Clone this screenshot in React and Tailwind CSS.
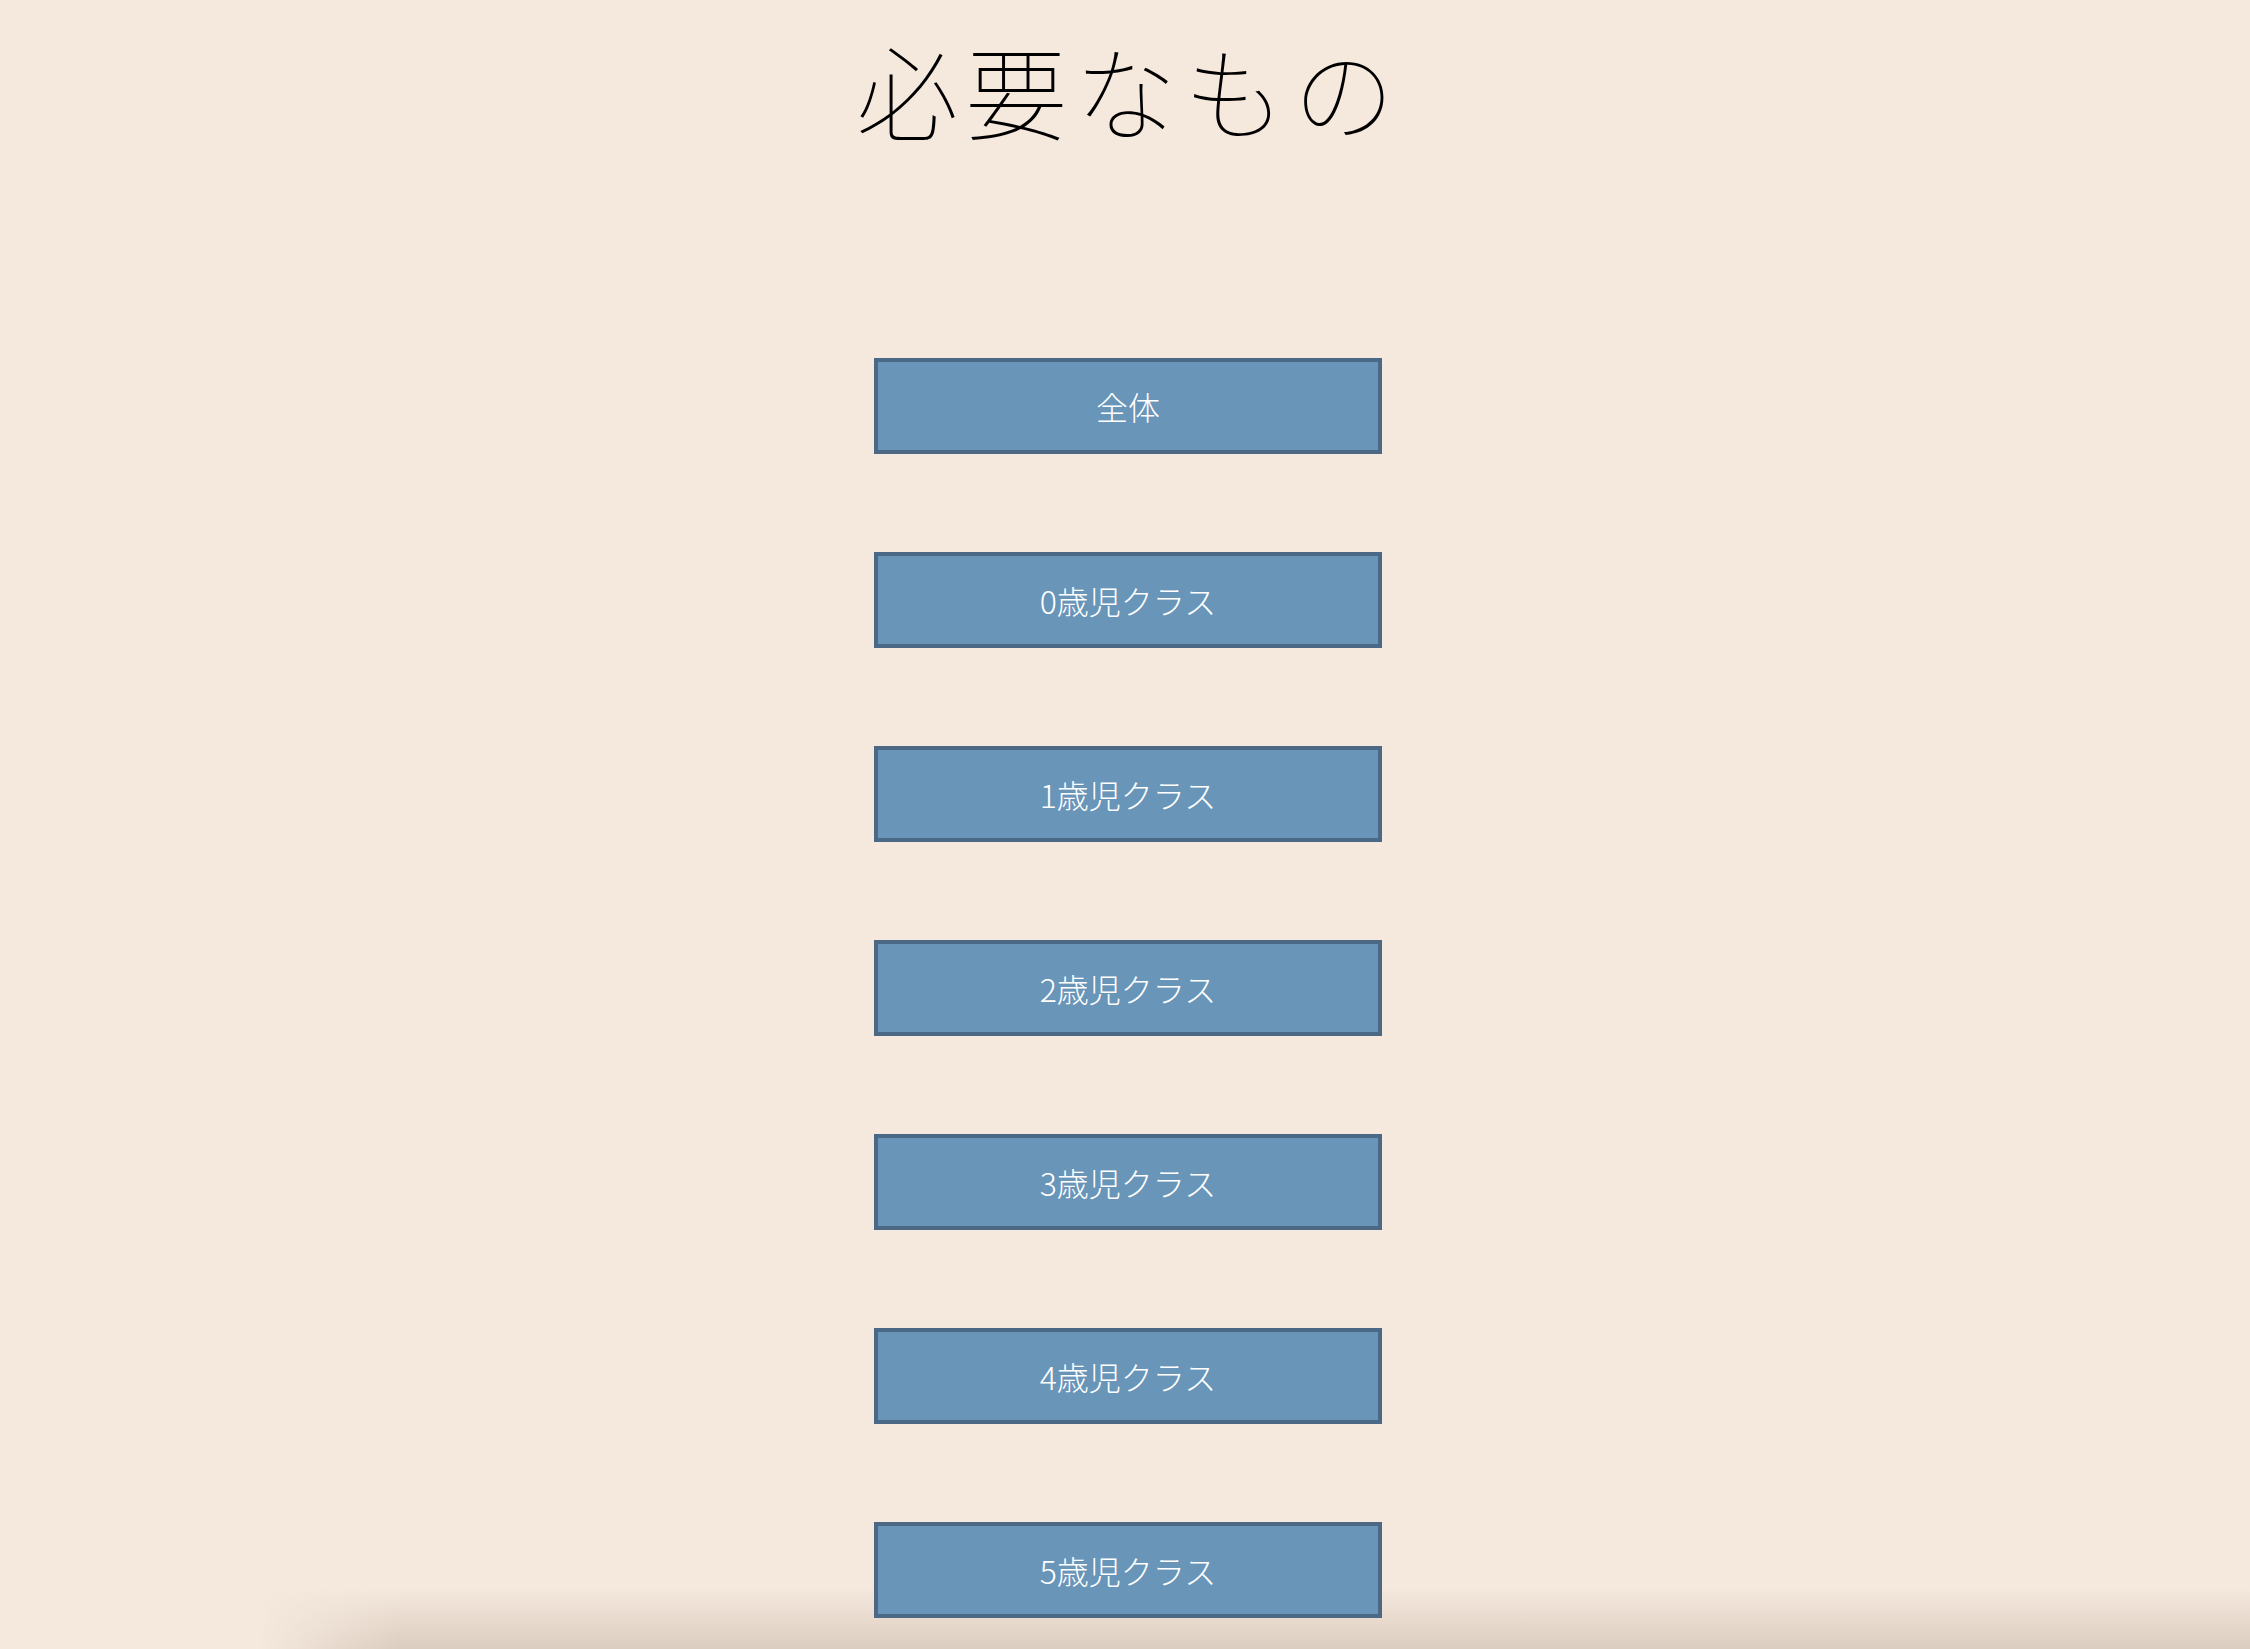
import React from "react";

const classes = ["全体", "0歳児クラス", "1歳児クラス", "2歳児クラス", "3歳児クラス", "4歳児クラス", "5歳児クラス"];

const App = () => {
  return (
    <div
      className="relative h-screen overflow-hidden bg-[#f5e8dd]"
      style={{ fontFamily: '"Noto Sans CJK JP", "Noto Sans", sans-serif' }}
    >
      {/* Title */}
      <h1 className="pt-[24px] pl-[8px] text-center text-[102px] font-thin leading-[130px] tracking-[0.07em] text-black">
        必要なもの
      </h1>

      {/* Class buttons */}
      <div className="relative z-10 mt-[204px] flex flex-col items-center gap-[98px] pl-[6px]">
        {classes.map((name) => (
          <button
            key={name}
            type="button"
            className="flex h-[96px] w-[508px] items-center justify-center border-4 border-[#4b6985] bg-[#6995b8] text-[32px] font-light text-white"
          >
            {name}
          </button>
        ))}
      </div>

      {/* bottom window shadow */}
      <div className="pointer-events-none absolute bottom-0 left-[260px] right-0 h-[60px] bg-gradient-to-b from-transparent to-[#dbcdbf] [mask-image:linear-gradient(to_right,transparent,black_140px)]"></div>
    </div>
  );
};

export default App;
